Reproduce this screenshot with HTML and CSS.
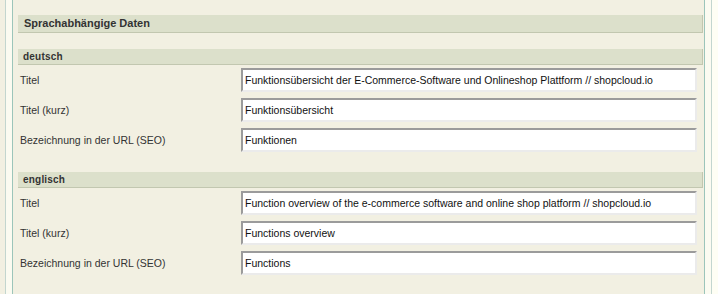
FILE: index.html
```html
<!DOCTYPE html>
<html lang="de">
<head>
  <meta charset="UTF-8" />
  <title>Sprachabhängige Daten</title>
  <link rel="stylesheet" href="styles.css">
</head>
<body>
  <div class="page">
    <div class="side"></div>
    <div class="frame">
      <div class="content">
        <h2 class="box-title">Sprachabhängige Daten</h2>

        <div class="lang">
          <h3 class="lang-title">deutsch</h3>
          <div class="row">
            <label>Titel</label>
            <input type="text" value="Funktionsübersicht der E-Commerce-Software und Onlineshop Plattform // shopcloud.io">
          </div>
          <div class="row">
            <label>Titel (kurz)</label>
            <input type="text" value="Funktionsübersicht">
          </div>
          <div class="row">
            <label>Bezeichnung in der URL (SEO)</label>
            <input type="text" value="Funktionen">
          </div>
        </div>

        <div class="lang">
          <h3 class="lang-title">englisch</h3>
          <div class="row">
            <label>Titel</label>
            <input type="text" value="Function overview of the e-commerce software and online shop platform // shopcloud.io">
          </div>
          <div class="row">
            <label>Titel (kurz)</label>
            <input type="text" value="Functions overview">
          </div>
          <div class="row">
            <label>Bezeichnung in der URL (SEO)</label>
            <input type="text" value="Functions">
          </div>
        </div>
      </div>
    </div>
  </div>
</body>
</html>
```

FILE: styles.css
```css
body {
  margin: 0;
  font-family: "Liberation Sans", Arial, sans-serif;
  background-color: #fefef4;
  color: #333;
  height: 294px;
  overflow: hidden;
}

.page {
  display: flex;
  height: 100%;
}

.side {
  width: 5px;
  background-color: #f2f0e2;
}

.frame {
  width: 693px;
  padding: 0 6px;
  background-color: #fbfbf1;
  border-left: 1px solid #c3d6cf;
  border-right: 1px solid #c3d6cf;
}

.content {
  height: 100%;
  padding: 15px 1px 0 5px;
  background-color: #f2f0e2;
  border-left: 1px solid #9cc5ba;
  border-right: 1px solid #9cc5ba;
}

.box-title {
  margin: 0 0 16px;
  height: 17px;
  line-height: 17px;
  padding-left: 6px;
  font-size: 11px;
  font-weight: bold;
  color: #333;
  background-color: #dce0cb;
  border-right: 1px solid #c2c7b0;
  border-bottom: 1px solid #c2c7b0;
}

.lang {
  margin-bottom: 17px;
}

.lang-title {
  margin: 0;
  height: 15px;
  line-height: 15px;
  padding-left: 5px;
  font-size: 10px;
  font-weight: bold;
  letter-spacing: 0.2px;
  color: #333;
  background-color: #dce0cb;
  border-right: 1px solid #c2c7b0;
  border-bottom: 1px solid #c2c7b0;
}

.row {
  display: flex;
  align-items: center;
  height: 30px;
}

.row label {
  width: 221px;
  padding-left: 2px;
  font-size: 10.5px;
  color: #333;
}

.row input {
  box-sizing: border-box;
  width: 456px;
  height: 24px;
  margin: 0;
  padding: 0 2px;
  font-family: "Liberation Sans", Arial, sans-serif;
  font-size: 10.5px;
  color: #111;
  background: #fff;
  border-top: 2px solid #9b9b9b;
  border-left: 2px solid #9b9b9b;
  border-right: 2px solid #ebebeb;
  border-bottom: 2px solid #ebebeb;
  outline: none;
}
```
